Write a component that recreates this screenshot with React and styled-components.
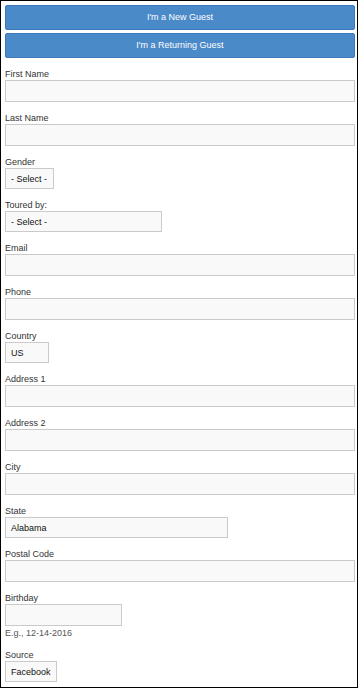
import React from "react";
import styled, { createGlobalStyle } from "styled-components";

const Global = createGlobalStyle`
  html, body { margin: 0; padding: 0; background: #fff; }
  * { box-sizing: border-box; }
`;

const Frame = styled.div`
  width: 358px;
  height: 688px;
  border: 1px solid #000;
  padding: 4px 2px 0 4px;
  font-family: "Liberation Sans", Arial, sans-serif;
  font-size: 9px;
  color: #333;
  display: flex;
  flex-direction: column;
  gap: 10px;
  overflow: hidden;
`;

const ButtonGroup = styled.div`
  display: flex;
  flex-direction: column;
  gap: 3px;
`;

const GuestButton = styled.button`
  width: 350px;
  height: 25px;
  margin: 0;
  padding: 0;
  background: #4b8ac8;
  border: 1px solid #3b78b9;
  border-radius: 2px;
  color: #fff;
  font-family: "Liberation Sans", Arial, sans-serif;
  font-size: 9px;
  line-height: 23px;
  text-align: center;
  cursor: pointer;
`;

const Form = styled.form`
  display: flex;
  flex-direction: column;
  gap: 10px;
  margin: 0;
`;

const Field = styled.div`
  display: flex;
  flex-direction: column;
  align-items: flex-start;
`;

const Label = styled.label`
  display: block;
  height: 12px;
  line-height: 12px;
  font-size: 9px;
  color: #333;
`;

const TextInput = styled.input`
  display: block;
  width: ${(p) => p.$w || 350}px;
  height: 22px;
  margin: 0;
  padding: 0 5px;
  background: #f9f9f9;
  border: 1px solid #cacaca;
  border-radius: 0;
  font-family: "Liberation Sans", Arial, sans-serif;
  font-size: 9px;
  outline: none;
`;

const Select = styled.select`
  display: block;
  width: ${(p) => p.$w}px;
  height: 21px;
  margin: 0;
  padding: 0 5px;
  background: #f9f9f9;
  border: 1px solid #cacaca;
  border-radius: 0;
  appearance: none;
  -webkit-appearance: none;
  font-family: "Liberation Sans", Arial, sans-serif;
  font-size: 9px;
  color: #111;
  outline: none;
`;

const Hint = styled.div`
  margin-top: 1px;
  height: 12px;
  line-height: 12px;
  font-size: 9px;
  color: #555;
`;

const TextField = ({ label, w }) => (
  <Field>
    <Label>{label}</Label>
    <TextInput type="text" $w={w} />
  </Field>
);

const SelectField = ({ label, w, value }) => (
  <Field>
    <Label>{label}</Label>
    <Select $w={w} defaultValue={value}>
      <option value={value}>{value}</option>
    </Select>
  </Field>
);

export default function App() {
  return (
    <>
      <Global />
      <Frame>
        <ButtonGroup>
          <GuestButton type="button">I'm a New Guest</GuestButton>
          <GuestButton type="button">I'm a Returning Guest</GuestButton>
        </ButtonGroup>
        <Form onSubmit={(e) => e.preventDefault()}>
          <TextField label="First Name" />
          <TextField label="Last Name" />
          <SelectField label="Gender" w={49} value="- Select -" />
          <SelectField label="Toured by:" w={157} value="- Select -" />
          <TextField label="Email" />
          <TextField label="Phone" />
          <SelectField label="Country" w={44} value="US" />
          <TextField label="Address 1" />
          <TextField label="Address 2" />
          <TextField label="City" />
          <SelectField label="State" w={223} value="Alabama" />
          <TextField label="Postal Code" />
          <Field>
            <Label>Birthday</Label>
            <TextInput type="text" $w={117} />
            <Hint>E.g., 12-14-2016</Hint>
          </Field>
          <SelectField label="Source" w={52} value="Facebook" />
        </Form>
      </Frame>
    </>
  );
}
